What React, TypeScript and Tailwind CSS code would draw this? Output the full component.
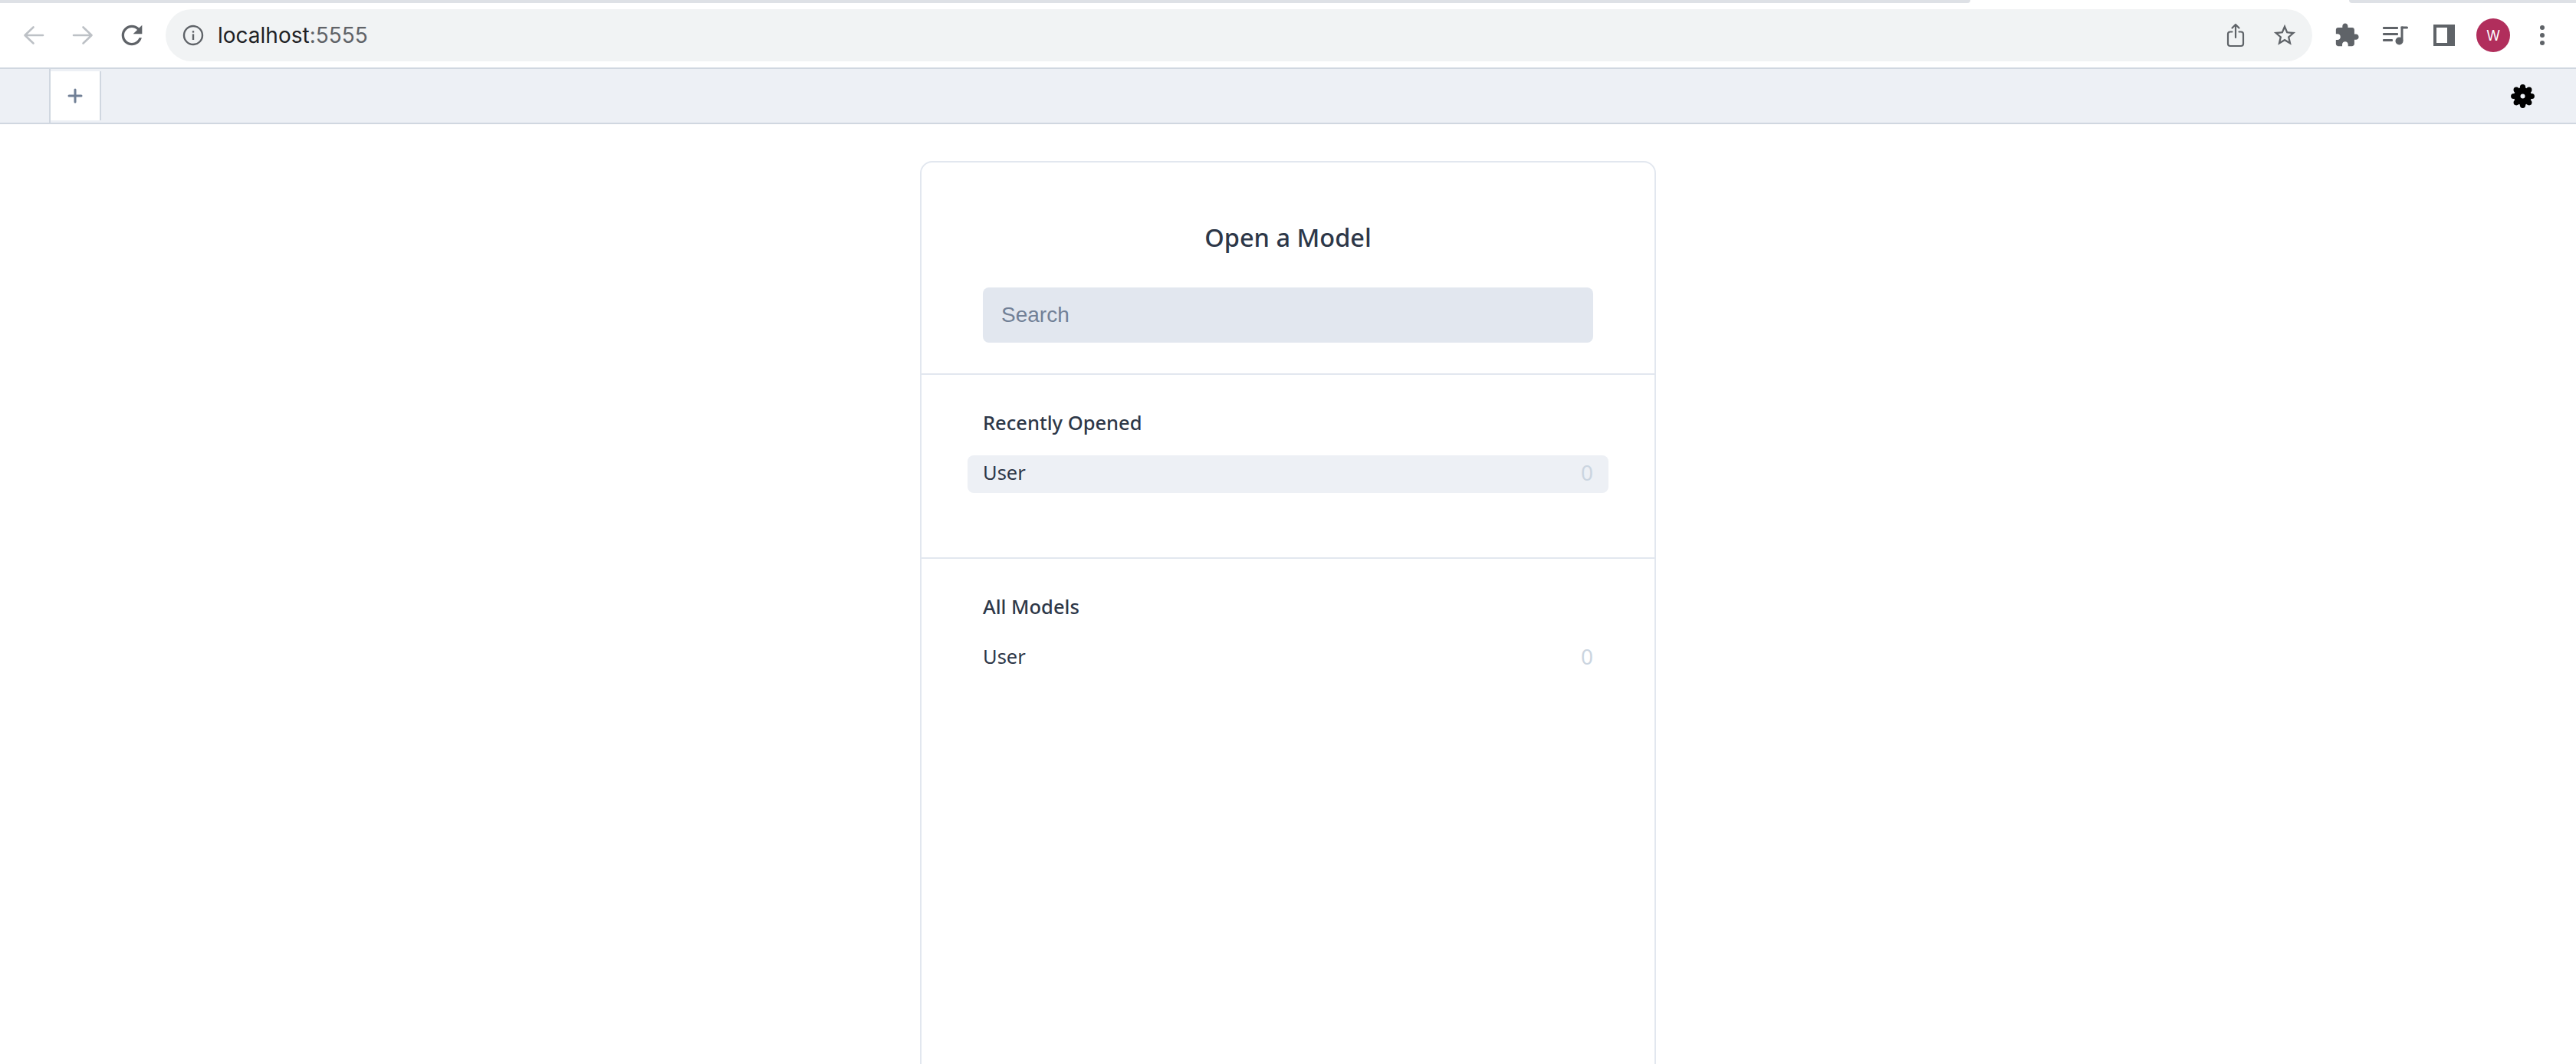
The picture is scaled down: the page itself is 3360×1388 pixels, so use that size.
function Back() {
  return (
    <svg width="28" height="26" viewBox="0 0 28 26" fill="none" stroke="#bdc1c6" strokeWidth="2.6" strokeLinecap="round" strokeLinejoin="round">
      <path d="M26 13H3M13.500 2.500 2.500 13l11 10.500" />
    </svg>
  );
}
function Forward() {
  return (
    <svg width="28" height="26" viewBox="0 0 28 26" fill="none" stroke="#bdc1c6" strokeWidth="2.6" strokeLinecap="round" strokeLinejoin="round">
      <path d="M2 13h23M14.500 2.500l11 10.500-11 10.500" />
    </svg>
  );
}
function Reload() {
  return (
    <svg width="40" height="40" viewBox="0 0 24 24" fill="#5f6368">
      <path d="M17.65 6.35C16.2 4.9 14.21 4 12 4c-4.42 0-7.99 3.58-7.99 8s3.57 8 7.99 8c3.73 0 6.84-2.55 7.73-6h-2.08c-.82 2.33-3.04 4-5.65 4-3.31 0-6-2.69-6-6s2.69-6 6-6c1.66 0 3.14.69 4.22 1.78L13 11h7V4l-2.35 2.35z" />
    </svg>
  );
}
function Info() {
  return (
    <svg width="28" height="28" viewBox="0 0 28 28" fill="none">
      <circle cx="14" cy="14" r="12" stroke="#5f6368" strokeWidth="2.4" />
      <rect x="12.800" y="12.400" width="2.400" height="7.600" fill="#5f6368" />
      <rect x="12.800" y="8.200" width="2.400" height="2.400" fill="#5f6368" />
    </svg>
  );
}
function Share() {
  return (
    <svg width="24" height="32" viewBox="0 0 24 32" fill="none" stroke="#5f6368" strokeWidth="2.2" strokeLinecap="round" strokeLinejoin="round">
      <path d="M7.500 11.500H5a3 3 0 0 0-3 3V27a3 3 0 0 0 3 3h14a3 3 0 0 0 3-3V14.500a3 3 0 0 0-3-3h-2.500" />
      <path d="M12 19V2.500M7.500 6.500 12 2l4.500 4.500" />
    </svg>
  );
}
function Star() {
  return (
    <svg width="34" height="34" viewBox="0 0 24 24" fill="#5f6368">
      <path d="M22 9.24l-7.19-.62L12 2 9.19 8.63 2 9.24l5.46 4.73L5.82 21 12 17.27 18.18 21l-1.63-7.03L22 9.24zM12 15.4l-3.76 2.27 1-4.28-3.32-2.88 4.38-.38L12 6.1l1.71 4.04 4.38.38-3.32 2.88 1 4.28L12 15.4z" />
    </svg>
  );
}
function Puzzle() {
  return (
    <svg width="34" height="34" viewBox="0 0 24 24" fill="#5f6368">
      <path d="M20.5 11H19V7c0-1.100-.9-2-2-2h-4V3.500C13 2.120 11.880 1 10.500 1S8 2.120 8 3.500V5H4c-1.100 0-1.990.9-1.990 2v3.800H3.500c1.490 0 2.700 1.210 2.700 2.700s-1.210 2.700-2.700 2.700H2V20c0 1.100.9 2 2 2h3.800v-1.500c0-1.490 1.210-2.700 2.700-2.700 1.490 0 2.700 1.210 2.700 2.700V22H17c1.100 0 2-.9 2-2v-4h1.500c1.380 0 2.500-1.120 2.500-2.500S21.880 11 20.500 11z" />
    </svg>
  );
}
function Media() {
  return (
    <svg width="33" height="26" viewBox="0 0 33 26" fill="#5f6368">
      <rect x="0" y="2" width="20" height="3" rx="1" />
      <rect x="0" y="10" width="20" height="3" rx="1" />
      <rect x="0" y="18" width="13" height="3" rx="1" />
      <circle cx="21.500" cy="20.500" r="5" />
      <rect x="23.500" y="1.500" width="3" height="19" />
      <rect x="23.500" y="1.500" width="9.500" height="3" rx="1.500" />
    </svg>
  );
}
function Panel() {
  return (
    <svg width="28" height="28" viewBox="0 0 28 28">
      <path fill="#5f6368" fillRule="evenodd" d="M0 0h28v28H0zM4 4v20h14V4z" />
    </svg>
  );
}
function Dots() {
  return (
    <svg width="6" height="26" viewBox="0 0 6 26" fill="#5f6368">
      <circle cx="3" cy="3" r="3" />
      <circle cx="3" cy="13" r="3" />
      <circle cx="3" cy="23" r="3" />
    </svg>
  );
}
function Plus() {
  return (
    <svg width="20" height="20" viewBox="0 0 20 20" fill="none" stroke="#718096" strokeWidth="3" strokeLinecap="round">
      <path d="M10 2v16M2 10h16" />
    </svg>
  );
}
function Gear() {
  const lobes = [0, 45, 90, 135, 180, 225, 270, 315];
  return (
    <svg width="31" height="31" viewBox="0 0 31 31">
      <circle cx="15.500" cy="15.500" r="11.500" fill="#000" />
      {lobes.map((a) => (
        <circle
          key={a}
          cx={15.5 + 11.8 * Math.cos((a * Math.PI) / 180)}
          cy={15.5 + 11.8 * Math.sin((a * Math.PI) / 180)}
          r="3.600"
          fill="#000"
        />
      ))}
      <circle cx="15.500" cy="15.500" r="3" fill="#edf0f5" />
    </svg>
  );
}
function Row({ active }: { active?: boolean }) {
  return (
    <div className={`mx-[60px] h-[49px] px-5 rounded-lg flex items-center justify-between text-[#2d3748] ${active ? "bg-[#edf0f5]" : ""}`}>
      <span className="text-[25.5px] -mt-[5px]">User</span>
      <span className="text-[28px] text-[#cbd5e0] -mt-[5px]">0</span>
    </div>
  );
}
export default function App() {
  return (
    <div className="w-[3360px] h-[1388px] overflow-hidden bg-white flex flex-col font-['Noto_Sans',sans-serif]">
      <div className="h-1 flex shrink-0">
        <div className="w-[2570px] bg-[#dee1e6] rounded-br-lg" />
        <div className="flex-1" />
        <div className="w-[296px] bg-[#dee1e6] rounded-bl-lg" />
      </div>
      <div className="h-[84px] shrink-0 flex items-center pl-[12px] bg-white">
        <div className="w-[64px] shrink-0 flex justify-center"><Back /></div>
        <div className="w-[64px] shrink-0 flex justify-center"><Forward /></div>
        <div className="w-[64px] shrink-0 flex justify-center"><Reload /></div>
        <div className="ml-[12px] w-[2800px] shrink-0 h-[68px] rounded-[34px] bg-[#f1f3f4] flex items-center pl-[22px] pr-[4px]">
          <Info />
          <div className="ml-[18px] text-[28px] text-[#202124] font-['Inter',sans-serif] flex-1">
            localhost<span className="text-[#5f6368]">:5555</span>
          </div>
          <div className="w-[64px] flex justify-center"><Share /></div>
          <div className="w-[64px] flex justify-center"><Star /></div>
        </div>
        <div className="ml-[13px] w-[64px] shrink-0 flex justify-center"><Puzzle /></div>
        <div className="w-[63px] shrink-0 flex justify-center"><Media /></div>
        <div className="w-[64px] shrink-0 flex justify-center"><Panel /></div>
        <div className="ml-[10px] w-[44px] h-[44px] shrink-0 rounded-full bg-[#b12e5c] text-white text-[18px] flex items-center justify-center font-['Inter',sans-serif]">W</div>
        <div className="ml-[10px] w-[64px] shrink-0 flex justify-center"><Dots /></div>
      </div>
      <div className="h-[74px] shrink-0 border-y-2 border-[#d0d7e0] bg-[#edf0f5] flex items-center pl-[64px] pr-[54px] justify-between">
        <div className="h-full border-l-2 border-[#d0d7e0] flex items-center">
          <div className="w-[66px] h-[64px] bg-white border-r-[2px] border-[#d0d7e0] flex items-center justify-center"><Plus /></div>
        </div>
        <Gear />
      </div>
      <div className="flex-1 min-h-0 overflow-hidden pt-12">
        <div className="mx-auto w-[960px] h-[1400px] border-2 border-[#e2e7ef] rounded-2xl">
          <div className="h-[277px] border-b-2 border-[#e2e7ef] px-20 pt-[73px]">
            <div className="text-center text-[32.5px] leading-[50px] font-medium text-[#2d3748]">Open a Model</div>
            <div className="mt-[40px] h-[72px] rounded-lg bg-[#e2e7ef] px-6 flex items-center text-[28px] text-[#718096] font-['Liberation_Sans',sans-serif]">Search</div>
          </div>
          <div className="h-[240px] border-b-2 border-[#e2e7ef] pt-[42px]">
            <div className="px-20 h-[40px] flex items-center text-[25.5px] font-medium text-[#2d3748]">Recently Opened</div>
            <div className="mt-[23px]"><Row active /></div>
          </div>
          <div className="pt-[42px]">
            <div className="px-20 h-[40px] flex items-center text-[25.5px] font-medium text-[#2d3748]">All Models</div>
            <div className="mt-[23px]"><Row /></div>
          </div>
        </div>
      </div>
    </div>
  );
}
